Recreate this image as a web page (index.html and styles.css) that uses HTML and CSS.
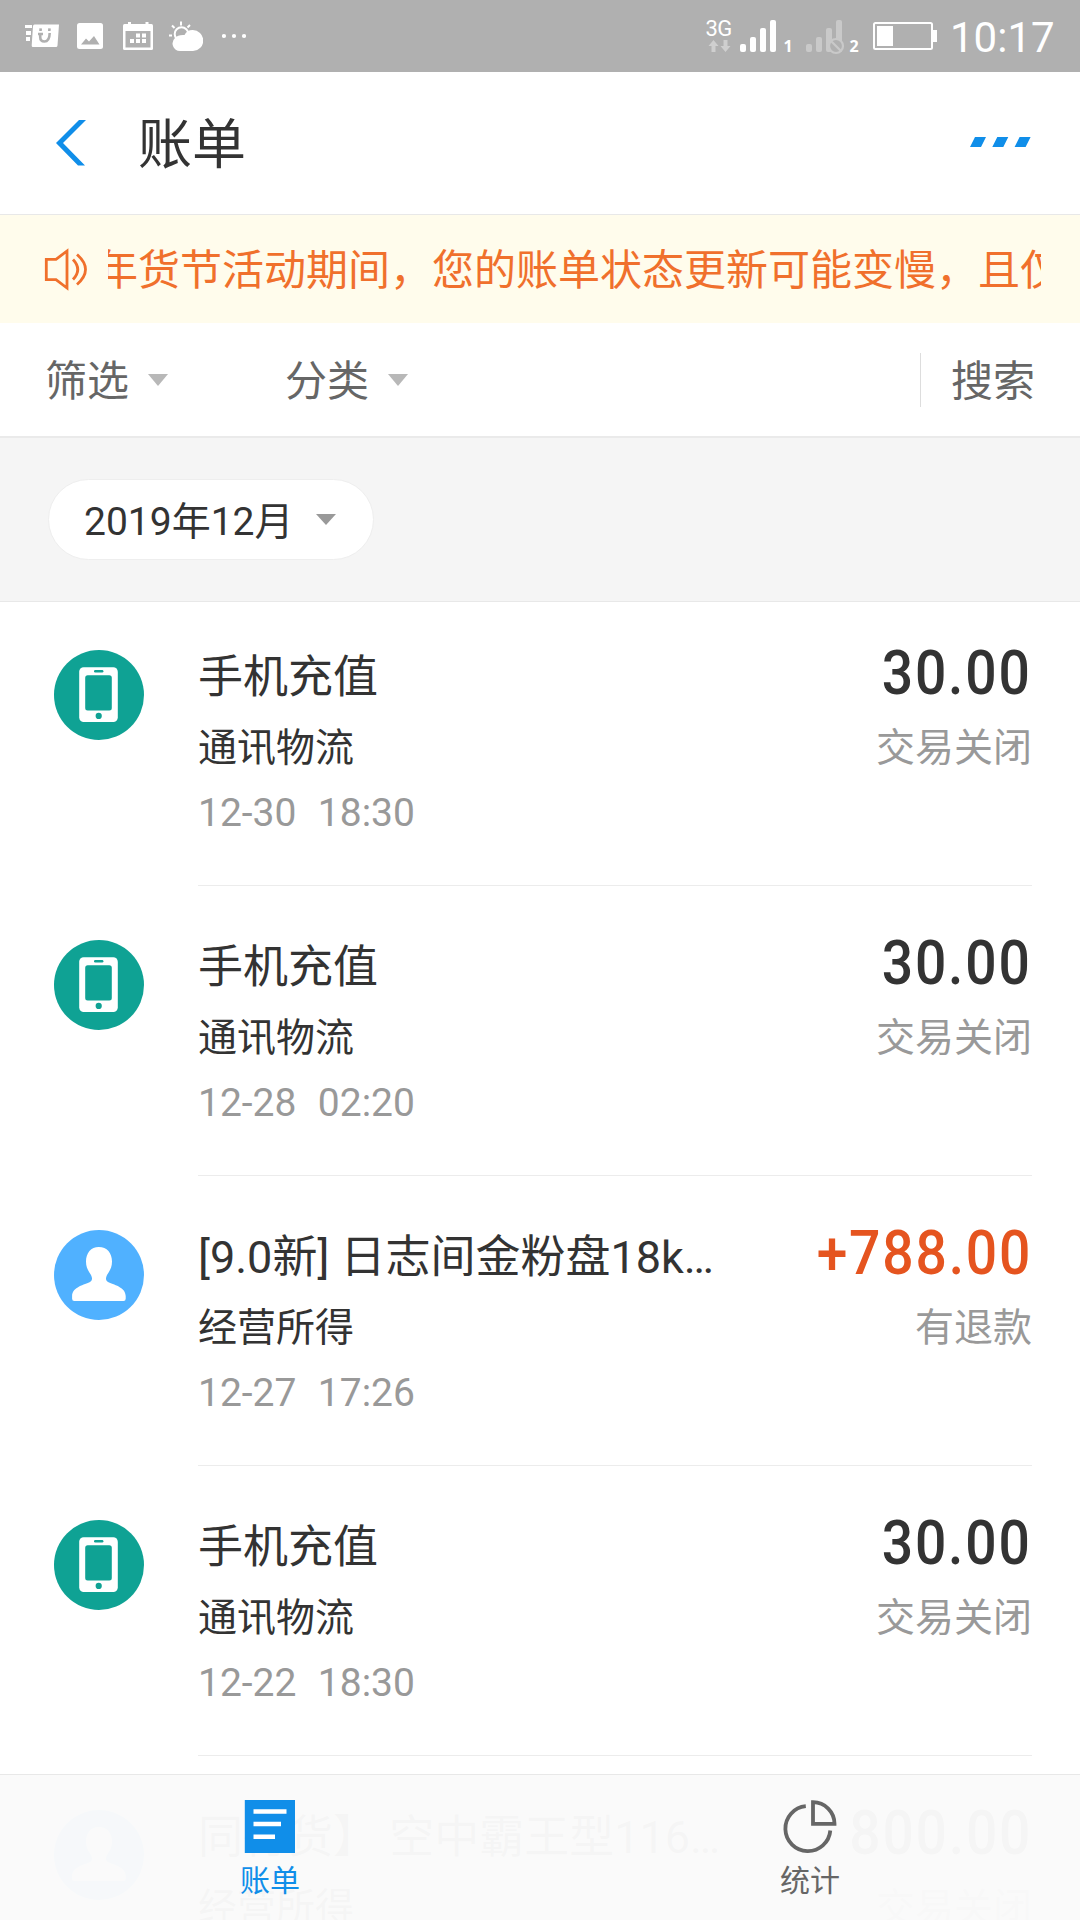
FILE: index.html
```html
<!DOCTYPE html>
<html lang="zh-CN">
<head>
<meta charset="utf-8">
<title>账单</title>
<link rel="stylesheet" href="styles.css">
</head>
<body>
<svg class="defs" width="0" height="0">
  <symbol id="phone" viewBox="0 0 90 90">
    <circle cx="45" cy="45" r="45" fill="#0fa294"/>
    <rect x="25.2" y="17.3" width="38.6" height="54.7" rx="4.5" fill="#fff"/>
    <rect x="31.2" y="25.2" width="26.6" height="35.2" rx="2.5" fill="#0fa294"/>
    <rect x="40" y="20" width="9.4" height="2.4" rx="1.2" fill="#0fa294"/>
    <circle cx="44.7" cy="65.9" r="3.1" fill="#0fa294"/>
  </symbol>
  <symbol id="person" viewBox="0 0 90 90">
    <circle cx="45" cy="45" r="45" fill="#50b1ff"/>
    <path fill="#fff" d="M44.8 17C53 17 58 23 58 31.500C58 38 55.500 41 53 45C51.500 48 51.500 50.500 54 52C59 54.500 71.700 57 71.700 66V68.800Q71.700 71 69.500 71H20.300Q18.100 71 18.100 68.800V66C18.100 57 31 54.500 36 52C38.500 50.500 38.500 48 37 45C34.500 41 32 38 32 31.500C32 23 37 17 44.800 17Z"/>
  </symbol>
</svg>
<div class="screen">
  <div class="status">
    <svg class="st-uc" width="34" height="36" viewBox="0 0 34 36"><g fill="#fff"><path d="M0 7h7v3H0zM1 13h5v4H1zM1 19h4v4H1z"/><path d="M9.500 6.500H34L32.500 27.500Q32.300 29 31 29H8Q6.600 29 6.700 27.500L8 8Q8.200 6.500 9.500 6.500Z"/></g><path d="M13 16h5M15.200 16V19Q15.200 23.500 19.500 23.500Q24.500 23.500 24.700 15M24.500 10.300l-.2 2.700M15.700 10.300l-.2 2.700" fill="none" stroke="#b0b0b0" stroke-width="2.600"/></svg>
    <svg class="st-pic" width="26" height="36" viewBox="0 0 26 36"><rect y="5" width="26" height="26" rx="2.500" fill="#fff"/><path d="M4 26.500L9 20.500L12 23.500L17 18L22.500 26.500Z" fill="#b0b0b0"/></svg>
    <svg class="st-cal" width="30" height="36" viewBox="0 0 30 36"><rect y="6" width="30" height="26" rx="1.500" fill="#fff"/><path d="M5 4h3v3H5zM22.500 4h3v3h-3z" fill="#fff"/><path d="M2.500 13h25v16.500h-25z" fill="#b0b0b0"/><path d="M13 15.500h4v4h-4zM19 15.500h4v4h-4zM7 21h4v4H7zM13 21h4v4h-4zM19 21h4v4h-4z" fill="#fff"/></svg>
    <svg class="st-sun" width="34" height="36" viewBox="0 0 34 36"><g fill="none" stroke="#fff" stroke-width="2"><circle cx="12.500" cy="16" r="6.800"/><path d="M0 17.500h3M3 7.500l2.500 2.500M12 3.500v4M21 7l-2.500 2.500"/></g><path d="M11 33A7.500 7.500 0 0 1 6 20Q9 16.500 15.500 17Q18 12 23.500 12A10.500 10.500 0 0 1 24 33Z" fill="#fff"/></svg>
    <svg class="st-dots" width="24" height="36" viewBox="0 0 24 36"><g fill="#fff"><circle cx="2" cy="18" r="2.100"/><circle cx="12" cy="18" r="2.100"/><circle cx="22" cy="18" r="2.100"/></g></svg>
    <svg class="st-net" width="240" height="40" viewBox="700 16 240 40">
      <text class="net-type" x="705.500" y="35.500">3G</text>
      <g fill="#fff" opacity=".4"><path d="M713.500 40l5 6h-3v6h-4v-6h-3zM725.500 52l5-6h-3v-6h-4v6h-3z"/></g>
      <g fill="#fff"><rect x="740" y="44" width="6" height="8" rx="2"/><rect x="750" y="37" width="6" height="15" rx="2"/><rect x="760" y="28" width="6" height="24" rx="2"/><rect x="770" y="20" width="6" height="32" rx="2"/></g>
      <text class="sim" x="783.500" y="52">1</text>
      <g fill="#c9c9c9"><rect x="806" y="44" width="6" height="8" rx="2"/><rect x="816" y="37" width="6" height="15" rx="2"/><rect x="826" y="28" width="6" height="24" rx="2"/><rect x="836" y="20" width="6" height="32" rx="2"/></g>
      <circle cx="836" cy="46" r="7" fill="#b0b0b0" stroke="#c9c9c9" stroke-width="2.200"/><path d="M831 41l10 10" stroke="#c9c9c9" stroke-width="2.200"/>
      <text class="sim" x="849.500" y="52">2</text>
      <rect x="874" y="23" width="58" height="26" rx="1.500" fill="none" stroke="#fff" stroke-width="2"/><path d="M877 26h16v20h-16zM933 30h4v12h-4z" fill="#fff"/>
    </svg>
    <span class="clock">10:17</span>
  </div>
  <header class="header">
    <svg class="back" width="32" height="48" viewBox="0 0 32 48"><path d="M24 1H31L8 24L30 46.500H23L1 24Z" fill="#108ee9"/></svg>
    <h1 class="title">账单</h1>
    <svg class="more" width="62" height="12" viewBox="0 0 62 12"><path d="M5 1H16L11 11H0ZM27.300 1H38.300L33.300 11H22.300ZM49.600 1H60.600L55.600 11H44.600Z" fill="#108ee9"/></svg>
  </header>
  <div class="notice">
    <svg width="44" height="44" viewBox="0 0 44 44" fill="none" stroke="#f0702c" stroke-width="2.800"><path d="M2.300 12.300H12L23 4V41L12 32.700H2.300Z"/><path d="M29 12.500Q38.500 22.500 29 32.500M33 7.500Q50 22.500 33 37.500"/></svg>
    <div class="marquee"><span>年货节活动期间，您的账单状态更新可能变慢，且仅</span></div>
  </div>
  <nav class="filters">
    <span class="filter">筛选<i class="caret"></i></span>
    <span class="filter second">分类<i class="caret"></i></span>
    <span class="search"><span>搜索</span></span>
  </nav>
  <div class="month-bar"><div class="month"><span>2019年12月</span><i class="caret dark"></i></div></div>
  <main class="list">
    <article class="item"><svg class="avatar"><use href="#phone"/></svg><div class="body"><div class="info"><h2>手机充值</h2><p>通讯物流</p><time>12-30  18:30</time></div><div class="sum"><b>30.00</b><em>交易关闭</em></div></div></article>
    <article class="item"><svg class="avatar"><use href="#phone"/></svg><div class="body"><div class="info"><h2>手机充值</h2><p>通讯物流</p><time>12-28  02:20</time></div><div class="sum"><b>30.00</b><em>交易关闭</em></div></div></article>
    <article class="item"><svg class="avatar"><use href="#person"/></svg><div class="body"><div class="info"><h2>[9.0新] 日志间金粉盘18k…</h2><p>经营所得</p><time>12-27  17:26</time></div><div class="sum"><b class="income">+788.00</b><em>有退款</em></div></div></article>
    <article class="item"><svg class="avatar"><use href="#phone"/></svg><div class="body"><div class="info"><h2>手机充值</h2><p>通讯物流</p><time>12-22  18:30</time></div><div class="sum"><b>30.00</b><em>交易关闭</em></div></div></article>
    <article class="item"><svg class="avatar"><use href="#person"/></svg><div class="body"><div class="info"><h2>同行货】 空中霸王型116…</h2><p>经营所得</p></div><div class="sum"><b>800.00</b><em>交易关闭</em></div></div></article>
  </main>
  <footer class="tabs">
    <div class="tab active"><svg width="54" height="54" viewBox="0 0 54 54"><path d="M1.800 0H52V53H1.800Z" fill="#108ee9"/><path d="M10.500 9.200H43.500V13.800H10.500ZM10.500 21.800H38V26.200H10.500ZM10.500 34.500H32V39H10.500Z" fill="#fff"/></svg><span>账单</span></div>
    <div class="tab"><svg width="54" height="54" viewBox="0 0 54 54" fill="none" stroke="#666" stroke-width="3.800"><path d="M22.800 6.200A22.500 22.500 0 1 0 47.300 30.500"/><path d="M30 2.200V23.800H51.500A21.600 21.600 0 0 0 30 2.200Z"/></svg><span>统计</span></div>
  </footer>
</div>
</body>
</html>
```
FILE: styles.css
```css
* { box-sizing: border-box; margin: 0; padding: 0; }
body { background: #fff; font-family: Roboto, "Noto Sans CJK SC", sans-serif; color: #333; }
svg { display: block; flex: none; }
.defs { position: absolute; }
.screen { position: relative; width: 1080px; height: 1920px; overflow: hidden; display: flex; flex-direction: column; }

.status { height: 72px; flex: none; background: #b0b0b0; display: flex; align-items: center; padding-left: 25px; color: #fff; }
.st-pic { margin-left: 18px; }
.st-cal { margin-left: 20px; }
.st-sun { margin-left: 16px; }
.st-dots { margin-left: 19px; }
.st-net { margin: 0 10px 0 454px; }
.net-type { font-size: 22px; fill: #fff; letter-spacing: -.5px; }
.sim { font: 700 16px "Open Sans", sans-serif; fill: #fff; }
.clock { font-size: 42px; line-height: 72px; padding-top: 3px; }

.header { height: 143px; flex: none; border-bottom: 1px solid #e8e8e8; display: flex; align-items: center; padding: 0 48px 0 55px; }
.title { font-size: 54px; font-weight: 400; line-height: 72px; margin-left: 51px; padding-top: 6px; }
.more { margin: 0 0 2px auto; }

.notice { height: 108px; flex: none; background: #fffcec; color: #f0702c; display: flex; align-items: center; padding: 0 39px 0 44px; }
.marquee { flex: 1; margin-left: 20px; overflow: hidden; white-space: nowrap; font-size: 42px; line-height: 60px; padding-top: 4px; }
.marquee span { margin-left: -12px; }

.filters { height: 115px; flex: none; border-bottom: 2px solid #eaeaea; display: flex; align-items: center; padding: 0 45px; font-size: 42px; color: #666; }
.filter { display: flex; align-items: center; gap: 19px; line-height: 60px; padding-top: 4px; }
.filter.second { margin-left: 117px; }
.caret { border: 10.5px solid transparent; border-top: 12px solid #b8b8b8; border-bottom: 0; }
.filter .caret { margin-bottom: 4px; }
.caret.dark { border-top: 11px solid #999; }
.search { margin-left: auto; border-left: 1px solid #ddd; padding: 4px 0 0 30px; line-height: 50px; }

.month-bar { height: 164px; flex: none; background: #f5f5f5; border-bottom: 1px solid #e8e8e8; padding: 41px 48px; }
.month { width: 326px; height: 81px; background: #fff; border: 1px solid #eee; border-radius: 41px; padding: 0 37px 0 35px; display: flex; align-items: center; justify-content: space-between; font-size: 39px; }
.month span { margin-bottom: 3px; }

.item { height: 290px; display: flex; padding-left: 54px; }
.item:first-child { margin-top: -6px; }
.avatar { width: 90px; height: 90px; margin: 54px 54px 0 0; }
.body { flex: 1; margin-right: 48px; border-bottom: 1px solid #ececec; display: flex; justify-content: space-between; padding-top: 47px; white-space: pre; }
h2 { font-size: 45px; font-weight: 400; line-height: 60px; margin-top: 5px; }
.info p { font-size: 39px; line-height: 54px; margin-top: 13px; }
time { display: block; font-size: 39px; line-height: 54px; margin-top: 11px; color: #999; word-spacing: 1px; }
.sum { display: flex; flex-direction: column; align-items: flex-end; }
.sum b { font-size: 61px; font-weight: 500; line-height: 60px; letter-spacing: 2px; transform: scaleX(.905); transform-origin: right; }
.sum em { font-size: 39px; font-style: normal; line-height: 54px; margin-top: 18px; color: #999; }
.sum .income { color: #e5541f; }

.tabs { position: absolute; left: 0; right: 0; bottom: 0; height: 146px; background: rgba(250, 250, 250, .975); border-top: 1px solid #e8e8e8; display: flex; }
.tab { flex: 1; display: flex; flex-direction: column; align-items: center; padding-top: 25px; font-size: 30px; line-height: 40px; color: #666; }
.tab span { margin-top: 7px; }
.tab.active { color: #108ee9; }
```
